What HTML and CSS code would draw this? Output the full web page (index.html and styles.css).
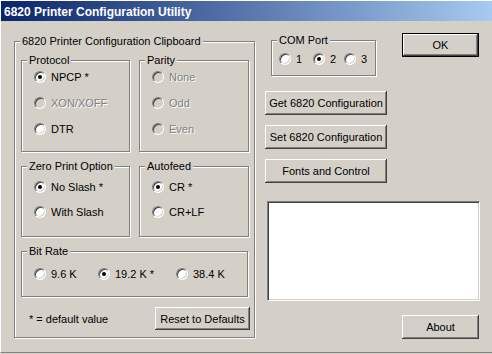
FILE: index.html
```html
<!DOCTYPE html>
<html lang="en">
	<head>
		<meta charset="UTF-8">
		<title>6820 Printer Configuration Utility</title>
		<link rel="stylesheet" href="styles.css">
	</head>
	<body>
		<div class="window">
			<div class="titlebar">6820 Printer Configuration Utility</div>
			<div class="client">
				<div class="group clip">
					<span class="cap">6820 Printer Configuration Clipboard</span>
					<div class="opts">
						<div class="group tall">
							<span class="cap">Protocol</span>
							<div class="rows tallrows">
								<label class="opt"><span class="rb on"></span>NPCP *</label>
								<label class="opt off"><span class="rb"></span>XON/XOFF</label>
								<label class="opt"><span class="rb"></span>DTR</label>
							</div>
						</div>
						<div class="group tall">
							<span class="cap">Parity</span>
							<div class="rows tallrows">
								<label class="opt off"><span class="rb"></span>None</label>
								<label class="opt off"><span class="rb"></span>Odd</label>
								<label class="opt off"><span class="rb"></span>Even</label>
							</div>
						</div>
						<div class="group short">
							<span class="cap">Zero Print Option</span>
							<div class="rows shortrows">
								<label class="opt"><span class="rb on"></span>No Slash *</label>
								<label class="opt"><span class="rb"></span>With Slash</label>
							</div>
						</div>
						<div class="group short">
							<span class="cap">Autofeed</span>
							<div class="rows shortrows">
								<label class="opt"><span class="rb on"></span>CR *</label>
								<label class="opt"><span class="rb"></span>CR+LF</label>
							</div>
						</div>
					</div>
					<div class="group bitrate">
						<span class="cap">Bit Rate</span>
						<div class="inline rates">
							<label class="opt"><span class="rb"></span>9.6 K</label>
							<label class="opt"><span class="rb on"></span>19.2 K *</label>
							<label class="opt"><span class="rb"></span>38.4 K</label>
						</div>
					</div>
					<div class="foot">
						<span>* = default value</span>
						<button class="btn reset">Reset to Defaults</button>
					</div>
				</div>
				<div class="side">
					<div class="top">
						<div class="group com">
							<span class="cap">COM Port</span>
							<div class="inline ports">
								<label class="opt"><span class="rb"></span>1</label>
								<label class="opt"><span class="rb on"></span>2</label>
								<label class="opt"><span class="rb"></span>3</label>
							</div>
						</div>
						<button class="btn ok">OK</button>
					</div>
					<button class="btn wide first">Get 6820 Configuration</button>
					<button class="btn wide">Set 6820 Configuration</button>
					<button class="btn wide">Fonts and Control</button>
					<div class="memo"></div>
					<button class="btn about">About</button>
				</div>
			</div>
		</div>
	</body>
</html>
```

FILE: styles.css
```css
html, body {
	margin: 0px;
	padding: 0px;
	background-color: #d4d0c8;
}
body {
	font-family: "Liberation Sans", Arial, sans-serif;
	font-size: 11px;
	color: #000;
}
.window {
	box-sizing: border-box;
	width: 492px;
	height: 353px;
	border-top: 1px solid #fff;
	border-left: 1px solid #fff;
	border-bottom: 1px solid #808080;
	background-color: #d4d0c8;
}
.titlebar {
	box-sizing: border-box;
	height: 20px;
	padding: 3px 0px 0px 3px;
	line-height: 17px;
	font-size: 12px;
	font-weight: bold;
	color: #fff;
	background: linear-gradient(to right, #0a246a, #a6caf0);
	white-space: nowrap;
}
.client {
	display: flex;
	align-items: flex-start;
}

/* etched group box */
.group {
	box-sizing: border-box;
	border: 1px solid #808080;
	box-shadow: 1px 1px 0px #fff, inset 1px 1px 0px #fff;
}
.cap {
	display: block;
	width: fit-content;
	height: 13px;
	line-height: 13px;
	margin: -7px 0px 0px 5px;
	padding: 0px 2px;
	background-color: #d4d0c8;
	white-space: nowrap;
}
.clip {
	width: 241px;
	height: 297px;
	margin: 20px 0px 0px 13px;
}
.clip > .cap {
	margin-left: 5px;
}
.opts {
	display: grid;
	grid-template-columns: 109px 110px;
	column-gap: 9px;
	row-gap: 14px;
	margin: 12px 0px 0px 6px;
}
.tall {
	height: 92px;
}
.short {
	height: 71px;
}
.rows {
	display: grid;
	padding-left: 12px;
}
.tallrows {
	margin-top: 2px;
	row-gap: 10px;
}
.shortrows {
	margin-top: 6px;
	row-gap: 9px;
}
.opt {
	display: flex;
	align-items: center;
	column-gap: 5px;
	height: 16px;
	white-space: nowrap;
}
.opt.off {
	color: #808080;
	text-shadow: 1px 1px 0px #fff;
}

/* classic radio */
.rb {
	box-sizing: border-box;
	display: grid;
	place-items: center;
	flex: none;
	width: 12px;
	height: 12px;
	border-radius: 50%;
	border: 1px solid;
	border-color: #808080 #fff #fff #808080;
	background-color: #fff;
	box-shadow: inset 1px 1px 0px #404040, inset -1px -1px 0px #d4d0c8;
}
.off > .rb {
	background-color: #d4d0c8;
}
.rb.on::after {
	content: "";
	width: 4px;
	height: 4px;
	border-radius: 50%;
	background-color: #000;
}
.bitrate {
	width: 227px;
	height: 46px;
	margin: 14px 0px 0px 6px;
}
.inline {
	display: flex;
}
.rates {
	margin-top: 8px;
	padding-left: 12px;
}
.rates > .opt:nth-child(1) {
	width: 64px;
}
.rates > .opt:nth-child(2) {
	width: 78px;
}
.foot {
	display: flex;
	align-items: center;
	margin-top: 10px;
	padding-left: 14px;
}
.reset {
	width: 95px;
	height: 23px;
	margin: 0px 4px 0px auto;
}

/* classic push button */
.btn {
	display: block;
	box-sizing: border-box;
	padding: 0px;
	border: none;
	background-color: #d4d0c8;
	font-family: "Liberation Sans", Arial, sans-serif;
	font-size: 11px;
	color: #000;
	box-shadow: inset -1px -1px 0px #404040, inset 1px 1px 0px #fff, inset -2px -2px 0px #808080, inset 2px 2px 0px #d4d0c8;
}
.side {
	width: 215px;
	margin-left: 10px;
}
.top {
	display: flex;
	align-items: flex-start;
	height: 55px;
}
.com {
	width: 105px;
	height: 36px;
	margin: 19px 0px 0px 6px;
}
.ports {
	margin-top: 4px;
	padding-left: 7px;
}
.ports > .opt:nth-child(1) {
	width: 34px;
}
.ports > .opt:nth-child(2) {
	width: 31px;
}
.ok {
	width: 77px;
	height: 24px;
	margin: 12px 1px 0px auto;
	border: 1px solid #000;
	box-shadow: inset -1px -1px 0px #404040, inset 1px 1px 0px #fff, inset -2px -2px 0px #808080;
}
.wide {
	width: 122px;
	height: 24px;
	margin-top: 10px;
}
.wide.first {
	margin-top: 15px;
}
.memo {
	box-sizing: border-box;
	width: 213px;
	height: 100px;
	margin: 18px 0px 0px 2px;
	background-color: #fff;
	border: 1px solid;
	border-color: #808080 #fff #fff #808080;
	box-shadow: inset 1px 1px 0px #404040, inset -1px -1px 0px #d4d0c8;
}
.about {
	width: 77px;
	height: 24px;
	margin: 14px 1px 0px auto;
}
```
